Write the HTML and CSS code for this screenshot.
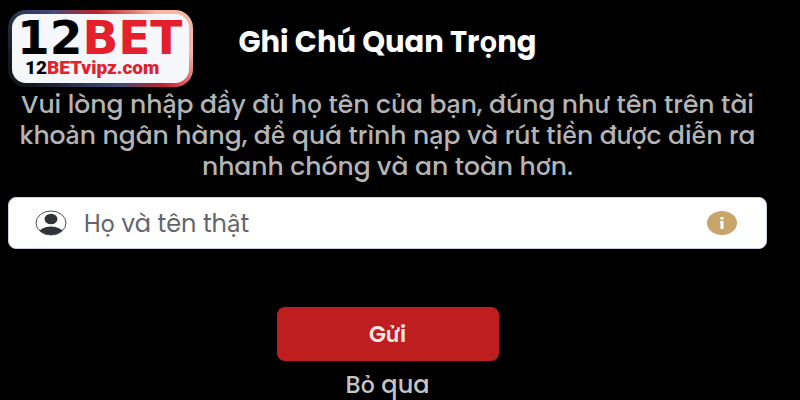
FILE: index.html
```html
<!DOCTYPE html>
<html lang="vi">
<head>
  <meta charset="UTF-8">
  <meta name="viewport" content="width=device-width, initial-scale=1.0">
  <title>Ghi Chú Quan Trọng</title>
  <link rel="stylesheet" href="styles.css">
</head>
<body>
  <a class="logo" href="#">
    <span class="logo-inner">
      <span class="logo-name">12<span class="red">BET</span></span>
      <span class="logo-site">12<span class="red">BETvipz.com</span></span>
    </span>
  </a>
  <main class="container">
    <h1>Ghi Chú Quan Trọng</h1>
    <p class="note">Vui lòng nhập đầy đủ họ tên của bạn, đúng như tên trên tài khoản ngân hàng, để quá trình nạp và rút tiền được diễn ra nhanh chóng và an toàn hơn.</p>
    <form id="name-form">
      <div class="field">
        <label for="fullname" aria-label="Họ và tên thật">
          <svg width="32" height="26" viewBox="0 0 32 26">
            <defs>
              <clipPath id="ring"><ellipse cx="16" cy="13" rx="15" ry="12" /></clipPath>
            </defs>
            <g clip-path="url(#ring)" fill="#2f3337">
              <ellipse cx="16" cy="9" rx="6.5" ry="5.3" />
              <ellipse cx="16" cy="23" rx="12" ry="6.5" />
            </g>
            <ellipse cx="16" cy="13" rx="15" ry="12" fill="none" stroke="#4a4d50" stroke-width="1" />
          </svg>
        </label>
        <input id="fullname" type="text" name="fullname" placeholder="Họ và tên thật">
        <button class="info" type="button" aria-label="Thông tin">
          <svg width="32" height="26" viewBox="0 0 32 26">
            <ellipse cx="16" cy="13" rx="15" ry="12" fill="#c8a56b" />
            <path d="M14.500 7h3v2.500h-3zM14 11h3.500v8h-3v-6H14z" fill="#fff" />
          </svg>
        </button>
      </div>
      <button class="submit" type="submit">Gửi</button>
      <button class="skip" type="button">Bỏ qua</button>
    </form>
  </main>
</body>
</html>
```

FILE: styles.css
```css
* {
  box-sizing: border-box;
}
body {
  font-family: Poppins, Inter, sans-serif;
  background-color: #000;
  color: #b4b4b4;
  margin: 0;
}
.logo {
  position: absolute;
  top: 10px;
  left: 8px;
  padding: 4px;
  border-radius: 18px;
  background: linear-gradient(48deg, #15171f 10%, #2b3350 28%, #3f4c78 44%, #c4202f 62%, #f6b8a4 85%);
  text-decoration: none;
}
.logo-inner {
  display: flex;
  flex-direction: column;
  padding: 6px 7px 3px 5px;
  border-radius: 14px;
  background: #f5f7fb;
  color: #000;
}
.logo-name {
  font: bold 47px/36px "DejaVu Sans", sans-serif;
}
.logo-site {
  padding-left: 8px;
  font: 900 19px/24px Roboto, sans-serif;
}
.red {
  color: #e3202b;
}
.container {
  padding: 24px 33px 0 8px;
  text-align: center;
}
h1 {
  margin: 0 0 28px;
  color: #fff;
  font-size: 29px;
  line-height: 37px;
  font-weight: 700;
}
.note {
  margin: 0 0 15px;
  font-size: 25px;
  line-height: 31px;
  font-weight: 500;
}
form {
  display: flex;
  flex-direction: column;
  align-items: center;
}
.field {
  display: flex;
  align-items: center;
  width: 100%;
  height: 52px;
  margin-bottom: 58px;
  padding: 0 28px 0 26px;
  border: 1px solid #c9cede;
  border-radius: 8px;
  background: #fff;
}
.field svg {
  display: block;
}
.field input {
  flex: 1;
  min-width: 0;
  padding: 0 17px;
  border: none;
  outline: none;
  background: none;
  color: #333;
  font: 400 24px Poppins, Inter, sans-serif;
}
.field input::placeholder {
  color: #62666a;
}
.info {
  padding: 0;
  border: none;
  background: none;
  cursor: pointer;
}
.submit {
  width: 222px;
  height: 54px;
  margin-bottom: 9px;
  border: none;
  border-radius: 8px;
  background: #bf1e21;
  color: #f8e8e8;
  font: 600 22px Poppins, Inter, sans-serif;
  cursor: pointer;
}
.skip {
  padding: 0;
  border: none;
  background: none;
  color: #c4c4c4;
  font: 500 24px/30px Poppins, Inter, sans-serif;
  cursor: pointer;
}
```
